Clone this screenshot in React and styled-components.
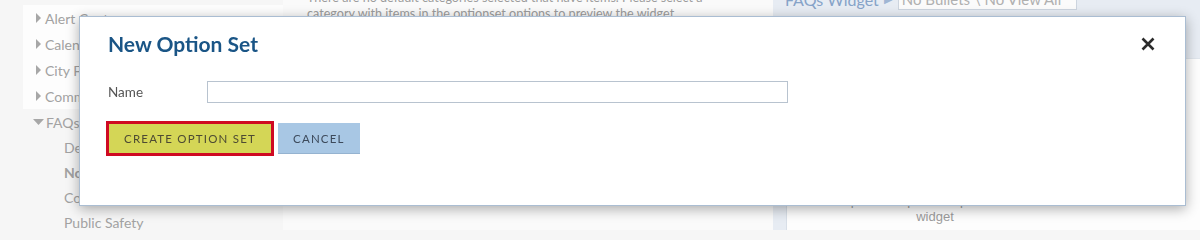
import React from 'react'
import styled, { createGlobalStyle } from 'styled-components'

const GlobalStyle = createGlobalStyle`
  html, body {
    margin: 0;
    padding: 0;
    background: #f6f6f6;
    font-family: Lato, "Liberation Sans", sans-serif;
  }
`

const Page = styled.div`
  display: grid;
  grid-template-columns: 283px 490px 1fr;
  height: 230px;
  overflow: hidden;
`

const Sidebar = styled.div`
  padding-top: 5px;
`

const TreePanel = styled.div`
  margin-left: 23px;
  background: #fdfdfd;
`

const TreeItem = styled.div`
  display: flex;
  align-items: center;
  gap: ${({ open }) => (open ? '2px' : '4px')};
  height: ${({ sub }) => (sub ? '25px' : '26px')};
  padding-left: ${({ sub, open, nested }) =>
    sub ? '64px' : open ? '33px' : nested ? '13px' : '36px'};
  color: #a2a2a2;
  font-size: 14px;
  font-weight: ${({ active }) => (active ? 700 : 400)};
  white-space: nowrap;
`

const Caret = ({ open }) =>
  open ? (
    <svg width="11" height="6" viewBox="0 0 11 6">
      <path d="M0 0 L11 0 L5.5 6 Z" fill="#a7a7a7" />
    </svg>
  ) : (
    <svg width="5" height="10" viewBox="0 0 5 10">
      <path d="M0 0 L5 5 L0 10 Z" fill="#a7a7a7" />
    </svg>
  )

const Middle = styled.div`
  padding-left: 24px;
  background: #fafafa;
`

const EmptyNote = styled.p`
  margin: -10px 0 0;
  max-width: 425px;
  font-size: 12.6px;
  line-height: 16px;
  color: #9c9c9c;
`

const RightPane = styled.div`
  background: #e7ecf3;
  display: flex;
  flex-direction: column;
`

const WidgetHeader = styled.div`
  display: flex;
  align-items: center;
  height: 24px;
  margin-top: -13px;
  padding-left: 12px;
  color: #86a3c8;
  font-size: 16px;
`

const Arrow = styled.span`
  font-size: 11px;
  margin: 0 6px 0 5px;
  color: #9fb6d4;
`

const LayoutSelect = styled.div`
  width: 179px;
  height: 22px;
  box-sizing: border-box;
  border: 1px solid #cdd5df;
  background: #fbfbfb;
  color: #b0b0b0;
  font-size: 15px;
  line-height: 20px;
  padding-left: 3px;
  white-space: nowrap;
  overflow: hidden;
`

const PreviewPanel = styled.div`
  flex: 1;
  margin: 47px 0 0 13px;
  background: #fdfdfd;
  border-left: 1px solid #d8dfe8;
  border-top: 1px solid #dfe5ec;
`

const PreviewText = styled.p`
  margin: 0;
  padding-top: 86px;
  width: 296px;
  text-align: center;
  white-space: pre-line;
  font-family: "Liberation Sans", Arial, sans-serif;
  font-size: 13px;
  line-height: 16px;
  color: #9c9c9c;
`

const Dialog = styled.div`
  position: fixed;
  left: 79px;
  top: 16px;
  width: 1107px;
  height: 190px;
  box-sizing: border-box;
  border: 1px solid #aabdd2;
  background: #fff;
  box-shadow: 0 3px 12px rgba(0, 0, 0, 0.32);
  padding: 14px 30px 0 28px;
`

const DialogHeader = styled.div`
  display: flex;
  align-items: center;
  justify-content: space-between;
`

const Title = styled.h2`
  margin: 0;
  font-size: 21px;
  line-height: 25px;
  font-weight: 700;
  color: #1a5586;
`

const CloseButton = styled.button`
  display: flex;
  padding: 0;
  border: none;
  background: none;
  cursor: pointer;
`

const FieldRow = styled.div`
  display: flex;
  align-items: center;
  margin-top: 25px;
`

const Label = styled.label`
  width: 99px;
  font-size: 13.5px;
  color: #555;
`

const TextInput = styled.input`
  width: 581px;
  height: 22px;
  box-sizing: border-box;
  border: 1px solid #b8c3cf;
  padding: 0 4px;
  font-family: inherit;
`

const ButtonRow = styled.div`
  display: flex;
  align-items: center;
  margin-top: 20px;
`

const Button = styled.button`
  box-sizing: border-box;
  height: ${({ primary }) => (primary ? '29px' : '31px')};
  padding: 0 15px;
  margin-left: ${({ primary }) => (primary ? '1px' : '7px')};
  border: none;
  border-bottom: ${({ primary }) => (primary ? 'none' : '1px solid #95b3d0')};
  outline: ${({ primary }) => (primary ? '3px solid #cf0a22' : 'none')};
  background: ${({ primary }) => (primary ? '#d4d656' : '#a8c7e4')};
  color: ${({ primary }) => (primary ? '#4d4a33' : '#3d4a5b')};
  font-family: Lato, sans-serif;
  font-size: 11.5px;
  letter-spacing: 1.2px;
  text-transform: uppercase;
  cursor: pointer;
`

const sidebarItems = ['Alert Center', 'Calendar', 'City Facilities', 'Community']
const faqItems = [
  { label: 'Default' },
  { label: 'No Bullets \\ No View All', active: true },
  { label: 'Coronavirus' },
  { label: 'Public Safety' },
]

export default function App() {
  return (
    <>
      <GlobalStyle />
      <Page>
        <Sidebar>
          <TreePanel>
            {sidebarItems.map((item) => (
              <TreeItem key={item} nested>
                <Caret />
                {item}
              </TreeItem>
            ))}
          </TreePanel>
          <TreeItem open>
            <Caret open />
            FAQs
          </TreeItem>
          {faqItems.map((item) => (
            <TreeItem key={item.label} sub active={item.active}>
              {item.label}
            </TreeItem>
          ))}
        </Sidebar>
        <Middle>
          <EmptyNote>
            There are no default categories selected that have items. Please select a category with
            items in the optionset options to preview the widget
          </EmptyNote>
        </Middle>
        <RightPane>
          <WidgetHeader>
            FAQs Widget
            <Arrow>▶</Arrow>
            <LayoutSelect>No Bullets \ No View All</LayoutSelect>
          </WidgetHeader>
          <PreviewPanel>
            <PreviewText>
              {'There are no default categories\nselected that have items. Please\nselect a category with items in the\noptionset options to preview the\nwidget'}
            </PreviewText>
          </PreviewPanel>
        </RightPane>
      </Page>

      <Dialog role="dialog" aria-label="New Option Set">
        <DialogHeader>
          <Title>New Option Set</Title>
          <CloseButton aria-label="Close">
            <svg width="14" height="14" viewBox="0 0 14 14">
              <path d="M1.5 1.5 L12.5 12.5 M12.5 1.5 L1.5 12.5" stroke="#2b2b2b" strokeWidth="2.6" />
            </svg>
          </CloseButton>
        </DialogHeader>
        <FieldRow>
          <Label htmlFor="option-set-name">Name</Label>
          <TextInput id="option-set-name" type="text" />
        </FieldRow>
        <ButtonRow>
          <Button primary>Create Option Set</Button>
          <Button>Cancel</Button>
        </ButtonRow>
      </Dialog>
    </>
  )
}
